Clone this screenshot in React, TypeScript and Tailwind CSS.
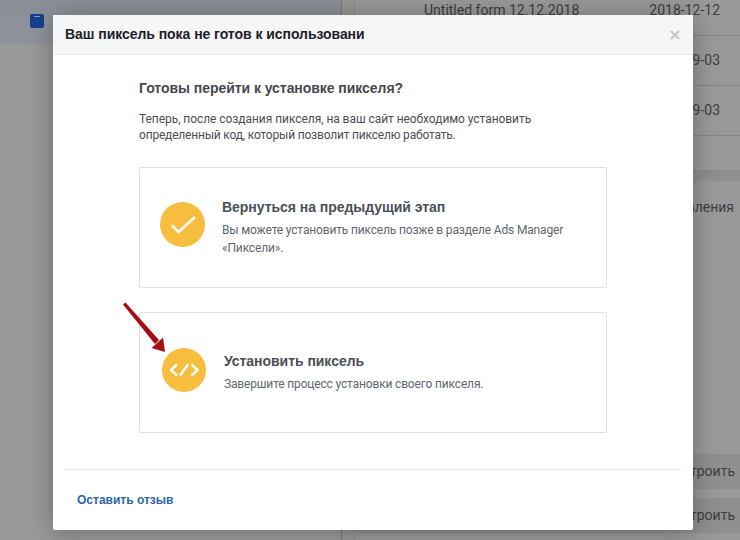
const font = { fontFamily: 'Roboto, sans-serif' };

function Background() {
  return (
    <div className="flex h-[540px] w-[740px] overflow-hidden bg-[#999999] font-['Roboto',sans-serif] text-[#3f3f3f]">
      <div className="w-[342px] shrink-0 border-r border-[#7c7c7c]">
        <div className="flex h-[44px] bg-gradient-to-b from-[#8b8f96] to-[#8f949c] pl-[30px] pt-[14px]">
          <div className="h-[14px] w-[14px] rounded-[2px] bg-[#14408a]">
            <div className="ml-[4px] mt-[2px] h-px w-[6px] bg-[#7f9ccc]" />
          </div>
        </div>
      </div>
      <div className="w-[12px] shrink-0 bg-[#979797]" />
      <div className="flex-1 border-l border-[#8b8b8b] text-[14px]">
        <div className="flex h-[36px] items-start justify-between border-b border-[#868686] pl-[69px] pr-[20px]">
          <span>Untitled form 12.12.2018</span>
          <span>2018-12-12</span>
        </div>
        <div className="flex h-[50px] items-center justify-end border-b border-[#868686] pr-[20px]">2018-09-03</div>
        <div className="flex h-[50px] items-center justify-end border-b border-[#868686] pr-[20px]">2018-09-03</div>
        <div className="h-[34px]" />
        <div className="h-[12px] bg-gradient-to-b from-[#8c8c8c] to-[#939393]" />
        <div className="flex h-[50px] items-center justify-end pr-[6px]">управления</div>
        <div className="h-[222px]" />
        <div className="flex h-[35px] items-center justify-end bg-[#8f8f8f] pr-[5px]">Настроить</div>
        <div className="h-[9px]" />
        <div className="flex h-[35px] items-center justify-end bg-[#8f8f8f] pr-[5px]">Настроить</div>
      </div>
    </div>
  );
}

function Option({ icon, title, lines, textClass }: { icon: React.ReactNode; title: string; lines: string[]; textClass: string }) {
  return (
    <div className="flex h-[121px] items-center rounded-[2px] border border-[#dddfe2] pl-[20px]">
      {icon}
      <div className={textClass}>
        <div className="font-['Liberation_Sans',sans-serif] text-[14px] font-bold leading-[18px] tracking-[-0.04px] text-[#4b4f56]">{title}</div>
        <div className="mt-[5px] text-[12px] leading-[18px] tracking-[-0.16px] text-[#606770]">
          {lines.map((l) => (
            <div key={l}>{l}</div>
          ))}
        </div>
      </div>
    </div>
  );
}

export default function App() {
  return (
    <div className="relative h-[540px] w-[740px] overflow-hidden" style={font}>
      <Background />
      <div className="absolute left-[53px] top-[15px] flex h-[515px] w-[640px] flex-col rounded-[2px] bg-white shadow-[0_2px_26px_rgba(0,0,0,0.3)]">
        <div className="flex h-[40px] shrink-0 items-center justify-between border-b border-[#e5e5e5] bg-[#f5f6f7] px-[12px]">
          <span className="font-['Liberation_Sans',sans-serif] text-[14px] font-bold tracking-[-0.05px] text-[#1d2129]">Ваш пиксель пока не готов к использовани</span>
          <svg width="10" height="10" viewBox="0 0 10 10" className="-translate-x-[1px]">
            <path d="M1 1l8 8M9 1L1 9" stroke="#c4c6ca" strokeWidth="2.2" />
          </svg>
        </div>
        <div className="flex flex-1 flex-col px-[86px] pt-[24px]">
          <div className="font-['Liberation_Sans',sans-serif] text-[14px] font-bold leading-[18px] tracking-[-0.05px] text-[#444950]">Готовы перейти к установке пикселя?</div>
          <div className="mt-[14px] text-[12px] leading-[16px] text-[#4b4f56]">
            <div className="tracking-[-0.06px]">Теперь, после создания пикселя, на ваш сайт необходимо установить</div>
            <div className="tracking-[-0.19px]">определенный код, который позволит пикселю работать.</div>
          </div>
          <div className="mt-[24px] flex flex-col gap-[24px]">
            <Option
              title="Вернуться на предыдущий этап"
              lines={['Вы можете установить пиксель позже в разделе Ads Manager', '«Пиксели».']}
              textClass="ml-[17px]"
              icon={
                <div className="-mt-[6px] flex h-[45px] w-[45px] shrink-0 items-center justify-center rounded-full bg-[#f7bd3e]">
                  <svg width="26" height="20" viewBox="0 0 26 20">
                    <path d="M2 10.500L8.500 17L25 2" fill="none" stroke="#fff" strokeWidth="2.600" />
                  </svg>
                </div>
              }
            />
            <Option
              title="Установить пиксель"
              lines={['Завершите процесс установки своего пикселя.']}
              textClass="ml-[18px]"
              icon={
                <div className="-mt-[6px] ml-[2px] flex h-[44px] w-[44px] shrink-0 items-center justify-center rounded-full bg-[#f7bd3e]">
                  <svg width="30" height="16" viewBox="0 0 30 16">
                    <path d="M8 2.500L2 8l6 5.500M22.500 2.500L28.500 8l-6 5.500M19 2.500L11 13.500" fill="none" stroke="#fff" strokeWidth="2.400" />
                  </svg>
                </div>
              }
            />
          </div>
        </div>
        <div className="mx-[12px] flex h-[61px] shrink-0 items-center border-t border-[#e5e5e5] pl-[12px]">
          <span className="font-['Liberation_Sans',sans-serif] text-[12px] font-bold text-[#2b66a8]">Оставить отзыв</span>
        </div>
      </div>
      {/* red annotation arrow drawn over the dialog */}
      <svg className="absolute left-[118px] top-[298px]" width="54" height="60" viewBox="0 0 54 60">
        <path d="M5 6.500L7.500 4.500L41 42L37 46Z" fill="#a50f14" />
        <path d="M47 54L33.500 50L45 39.500Z" fill="#a50f14" />
      </svg>
    </div>
  );
}
